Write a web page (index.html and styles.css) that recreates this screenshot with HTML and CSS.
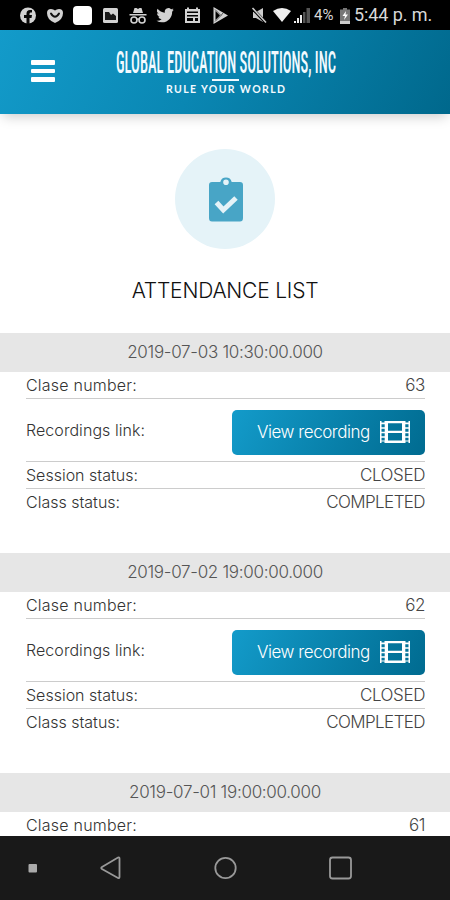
FILE: index.html
```html
<!DOCTYPE html>
<html lang="en">
<head>
<meta charset="utf-8">
<title>Attendance list</title>
<link rel="stylesheet" href="styles.css">
</head>
<body>
<svg class="defs" width="0" height="0">
  <symbol id="film" viewBox="0 0 30 22">
    <path fill="#fff" fill-rule="evenodd" d="M0 0H1.500V1.500H4.500V0H25.500V1.500H28.500V0H30V22H28.500V20.500H25.500V22H4.500V20.500H1.500V22H0ZM1.500 3.300V6.200H4.700V3.300ZM1.500 7.800V10.700H4.700V7.800ZM1.500 12.300V15.200H4.700V12.300ZM1.500 16.800V19.500H4.700V16.800ZM25.300 3.300V6.200H28.500V3.300ZM25.300 7.800V10.700H28.500V7.800ZM25.300 12.300V15.200H28.500V12.300ZM25.300 16.800V19.500H28.500V16.800ZM8 2.300V9.700H22V2.300ZM8 12V19.600H22V12Z"/>
  </symbol>
</svg>
<div class="screen">
  <div class="status">
    <svg class="notifications" width="210" height="30" viewBox="18 0 210 30" fill="#d2d2d2">
      <circle cx="28" cy="15.500" r="8"/>
      <path d="M26.500 24V18H24V15H26.500V13.500Q26.500 10 30 10H32V12.500H30.500Q29.500 12.500 29.500 14V15H32L31.500 18H29.500V24Z" fill="#080808"/>
      <path d="M47 13Q47 9 51 9Q53.500 9 55 10.500Q56.500 9 59 9Q63 9 63 13Q63 20 55 23Q47 20 47 13Z"/>
      <path d="M51 13.500Q55 20 59 13.500" fill="none" stroke="#111" stroke-width="2" stroke-linecap="round"/>
      <rect x="73" y="6" width="19" height="19" rx="4" fill="#fff"/>
      <rect x="103" y="8" width="15" height="15" rx="1.500"/>
      <path d="M105 20V12H109L111 15L113 13.500L116 16V20Z" fill="#181818"/>
      <path d="M133 13L134.500 8H136.500L138 9L139.500 8H141.500L143 13ZM129.500 14H146.500V15.500H129.500Z"/>
      <g fill="none" stroke="#d2d2d2" stroke-width="1.600"><circle cx="134" cy="20" r="3"/><circle cx="142" cy="20" r="3"/><path d="M137 19.500Q138 18.500 139 19.500"/></g>
      <path transform="translate(156.500 6.500) scale(.73)" d="M23.600 4.600a9.600 9.600 0 0 1-2.800.8 4.900 4.900 0 0 0 2.200-2.700 9.800 9.800 0 0 1-3.100 1.200 4.900 4.900 0 0 0-8.400 4.500A13.900 13.900 0 0 1 1.400 3.200a4.900 4.900 0 0 0 1.500 6.500 4.900 4.900 0 0 1-2.200-.6c0 2.300 1.600 4.400 3.900 4.900a4.900 4.900 0 0 1-2.200.1 4.900 4.900 0 0 0 4.600 3.400A9.900 9.900 0 0 1 0 19.500a13.900 13.900 0 0 0 7.500 2.200c9.100 0 14.300-7.700 13.900-14.600a10 10 0 0 0 2.200-2.500z"/>
      <path fill-rule="evenodd" d="M185 9H187V7.500H189V9H196V7.500H198V9H200V23H185ZM187 11.500V13H198V11.500ZM187 15V16.500H198V15ZM187 18V21H193V18ZM195 18V21H198V18Z"/>
      <path fill-rule="evenodd" d="M213.500 7L228 15.500L213.500 24ZM215.500 11V20L220 15.500Z"/>
      <path d="M215 9.500L221 15.500L215 21.500M221 15.500L223 13" fill="none" stroke="#555"/>
    </svg>
    <div class="system">
      <svg width="60" height="30" viewBox="251 0 60 30">
        <path d="M253 12H256L263 8V22L256 18H253Z" fill="#ccc"/>
        <path d="M252 8L266 23" stroke="#000" stroke-width="3"/>
        <path d="M252.500 8L266 22.500" stroke="#ccc" stroke-width="1.600"/>
        <path d="M273 11Q282 5 291 11L282 22Z" fill="#f0f0f0"/>
        <g fill="#eee"><path d="M294 21H296V23H294ZM297 18H299V23H297ZM300 15H302V23H300Z"/><path fill="#555" d="M303 12H305.500V23H303ZM306.500 8H310V23H306.500Z"/></g>
      </svg>
      <span class="percent">4%</span>
      <svg width="12" height="30" viewBox="339 0 12 30"><path d="M343 8H347V9.500H350V24H340V9.500H343Z" fill="#777"/><path d="M340 21H350V24H340Z" fill="#ccc"/><path d="M346 11L342.500 16H345L344 20L348 14.500H345.500Z" fill="#fff"/></svg>
      <span class="clock">5:44 p. m.</span>
    </div>
  </div>
  <header class="header">
    <div class="menu"><i></i><i></i><i></i></div>
    <svg class="logo" width="224" height="56" viewBox="0 0 224 56" fill="#f2faff">
      <text class="brand" x="2" y="30.800" textLength="220" lengthAdjust="spacingAndGlyphs">GLOBAL EDUCATION SOLUTIONS, INC</text>
      <rect x="98" y="37" width="27" height="2"/>
      <text class="tagline" x="52" y="51.300" textLength="119" lengthAdjust="spacing">RULE YOUR WORLD</text>
    </svg>
  </header>
  <main class="content">
    <div class="badge">
      <svg width="34" height="46" viewBox="0 0 34 46"><path fill="#48a5c6" fill-rule="evenodd" d="M3 6H11.300A5.900 5.900 0 0 1 22.700 6H31Q34 6 34 9V42Q34 45.500 31 45.500H3Q0 45.500 0 42V9Q0 6 3 6ZM17 3.500A2.800 2.800 0 1 0 17 9.100A2.800 2.800 0 0 0 17 3.500Z"/><path d="M7.500 26.500L14.300 34L27 22" fill="none" stroke="#e5f3f8" stroke-width="5"/></svg>
    </div>
    <h1>ATTENDANCE LIST</h1>
    <section class="session">
      <h2>2019-07-03 10:30:00.000</h2>
      <div class="row"><span class="l-number">Clase number:</span><b>63</b></div>
      <div class="row link"><span class="l-link">Recordings link:</span><a class="button"><em>View recording</em><svg width="30" height="22"><use href="#film"/></svg></a></div>
      <div class="row"><span class="l-session">Session status:</span><b class="closed">CLOSED</b></div>
      <div class="row last"><span class="l-class">Class status:</span><b class="completed">COMPLETED</b></div>
    </section>
    <section class="session">
      <h2>2019-07-02 19:00:00.000</h2>
      <div class="row"><span class="l-number">Clase number:</span><b>62</b></div>
      <div class="row link"><span class="l-link">Recordings link:</span><a class="button"><em>View recording</em><svg width="30" height="22"><use href="#film"/></svg></a></div>
      <div class="row"><span class="l-session">Session status:</span><b class="closed">CLOSED</b></div>
      <div class="row last"><span class="l-class">Class status:</span><b class="completed">COMPLETED</b></div>
    </section>
    <section class="session">
      <h2>2019-07-01 19:00:00.000</h2>
      <div class="row last"><span class="l-number">Clase number:</span><b>61</b></div>
    </section>
  </main>
  <nav class="nav">
    <svg width="450" height="64" viewBox="0 836 450 64" fill="none" stroke="#999" stroke-width="1.800">
      <rect x="28.500" y="864" width="8.500" height="8.500" rx="1" fill="#aaa" stroke="none"/>
      <path d="M118 857.500Q119.500 857 119.500 858.500V877Q119.500 878.500 118 878L102 869Q100.500 868 102 867Z"/>
      <circle cx="225.500" cy="868" r="10.200"/>
      <rect x="330" y="857.500" width="21" height="21" rx="2.500"/>
    </svg>
  </nav>
</div>
</body>
</html>
```
FILE: styles.css
```css
* { box-sizing: border-box; }
body { margin: 0; background: #fff; font-family: Inter, sans-serif; }
.defs { display: none; }
.screen { width: 450px; height: 900px; display: flex; flex-direction: column; overflow: hidden; }
svg { flex: none; display: block; }

.status { height: 30px; flex: none; background: #000; display: flex; justify-content: space-between; padding: 0 18px; }
.system { display: flex; align-items: center; color: #d8d8d8; font-family: Roboto, sans-serif; white-space: nowrap; }
.percent { width: 28px; padding-left: 3px; font-size: 15px; line-height: 32px; letter-spacing: 0; }
.clock { width: 78px; margin-left: 3px; font-size: 18px; line-height: 32px; letter-spacing: -.1px; }
.notifications { margin-right: auto; }

.header { height: 84px; flex: none; display: flex; align-items: flex-start; padding: 0 31px; background: linear-gradient(118deg, #139bca 0%, #0a87b3 45%, #00688c 100%); box-shadow: 0 5px 12px -3px rgba(0, 0, 0, .22); }
.menu { width: 24px; margin-top: 30px; display: flex; flex-direction: column; gap: 4px; }
.menu i { height: 4.500px; background: #fff; border-radius: 1px; }
.logo { margin: 12px 0 0 59px; overflow: visible; }
.brand { font: 500 31px "Roboto Condensed", Roboto, sans-serif; }
.tagline { font: 700 10.500px Lato, sans-serif; }

.content { flex: 1; min-height: 0; overflow: hidden; display: flex; flex-direction: column; }
.badge { width: 100px; height: 100px; flex: none; margin: 35px auto 0; border-radius: 50%; background: #e5f3f8; display: flex; align-items: center; justify-content: center; padding-left: 2px; }
h1 { margin: 27px 0 28px; font-size: 21px; font-weight: 300; line-height: 29px; text-align: center; color: #111; letter-spacing: -.2px; }
.session { height: 220px; flex: none; }
h2 { margin: 0; height: 38.500px; line-height: 38px; background: #e6e6e6; font-size: 17px; font-weight: 300; text-align: center; color: #555; letter-spacing: -.3px; }
.row { height: 27px; margin: 0 25px 0 26px; display: flex; align-items: center; justify-content: space-between; border-bottom: 1.500px solid #ccc; font-size: 16px; color: #333; white-space: nowrap; }
.row b { font-weight: 300; font-size: 17px; color: #444; letter-spacing: -.4px; }
.row .completed { letter-spacing: -.6px; }
.row span { font-weight: 350; }
.row .l-number { letter-spacing: .22px; }
.row .l-link { letter-spacing: .06px; }
.link { height: 63px; }
.last { border-bottom: 0; }
.button { width: 193px; height: 45px; margin-top: 5px; border-radius: 5px; background: linear-gradient(118deg, #139bca, #006b90); display: flex; align-items: center; justify-content: space-between; padding: 0 15px 0 25px; color: #fff; }
.button em { font-style: normal; font-size: 17px; font-weight: 350; letter-spacing: -.45px; }

.nav { height: 64px; flex: none; background: #191919; }
```
